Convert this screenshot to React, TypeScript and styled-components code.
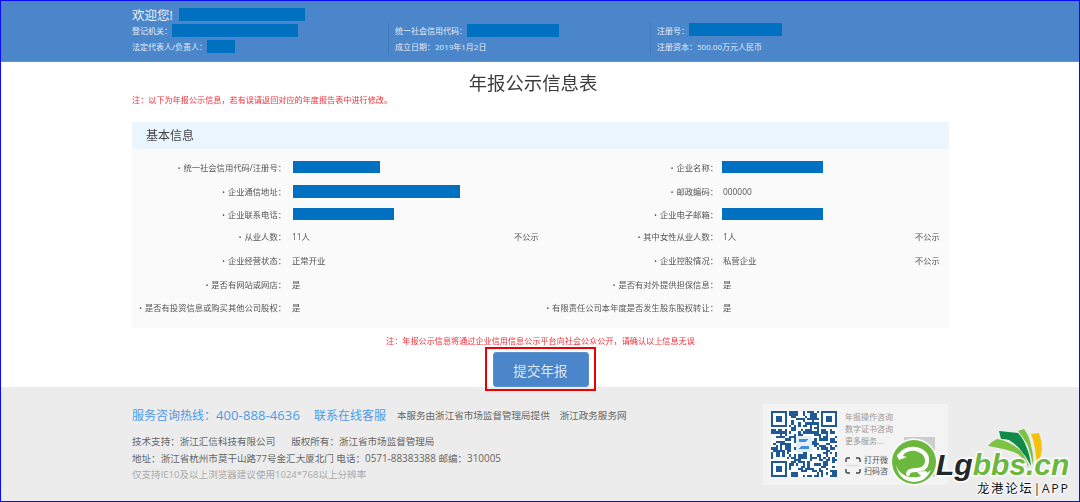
import React from "react";
import styled, { createGlobalStyle } from "styled-components";

const Global = createGlobalStyle`
  html, body { margin: 0; padding: 0; background: #fff; }
  body { font-family: "Open Sans", "Noto Sans CJK SC", sans-serif; }
  * { box-sizing: border-box; }
`;

const Page = styled.div`
  position: relative;
  width: 1080px;
  height: 502px;
  overflow: hidden;
  border: 1px solid #0a0aff;
  filter: blur(0.3px);
  display: flex;
  flex-direction: column;
`;

const Header = styled.header`
  height: 61px;
  flex: none;
  background: #4a86c9;
  border-bottom: 1px solid #5b93d0;
  padding: 5px 0 0 131px;
  color: #e4edf7;
  font-size: 8px;
`;
const Welcome = styled.div`
  height: 16px;
  display: flex;
  align-items: center;
  font-size: 12.5px;
  gap: 6px;
  color: #eef4fb;
`;
const InfoGrid = styled.div`
  display: grid;
  grid-template-columns: 256px 262px 300px;
  grid-auto-rows: 16px;
`;
const InfoCell = styled.div<{ $line?: boolean }>`
  display: flex;
  align-items: center;
  padding-left: ${(p) => (p.$line ? "6px" : "0")};
  border-left: ${(p) => (p.$line ? "1px solid #4379b8" : "none")};
`;
const Redact = styled.span<{ $w: number; $h?: number; $up?: number }>`
  display: inline-block;
  flex: none;
  width: ${(p) => p.$w}px;
  height: ${(p) => p.$h ?? 13}px;
  margin-top: ${(p) => -(p.$up ?? 0)}px;
  background: #0070c0;
`;

const Main = styled.main`
  position: relative;
  z-index: 1;
  flex: 1;
  min-height: 0;
  padding: 0 130px 0 131px;
  display: flex;
  flex-direction: column;
`;
const Title = styled.h1`
  margin: 10px 15px 0 0;
  height: 22px;
  line-height: 22px;
  font-size: 18.4px;
  font-weight: 400;
  color: #3c3c3c;
  text-align: center;
`;
const RedNote = styled.div<{ $center?: boolean }>`
  font-size: 8.15px;
  line-height: 12px;
  color: #f5303a;
  text-align: ${(p) => (p.$center ? "center" : "left")};
`;
const Panel = styled.section`
  margin-top: 16px;
  background: #fafafa;
`;
const PanelHead = styled.h2`
  margin: 0;
  height: 27px;
  line-height: 27px;
  padding-left: 14px;
  background: #eaf5fd;
  font-size: 12px;
  font-weight: 400;
  color: #444;
`;
const PanelBody = styled.div`
  padding: 6px 8px 9px 0;
`;
const InfoRow = styled.div<{ $h: number }>`
  display: grid;
  grid-template-columns: 160px 222px 25px 182px 194px 25px;
  height: ${(p) => p.$h}px;
  align-items: center;
  font-size: 8px;
  color: #555;
`;
const Label = styled.div<{ $pad: number }>`
  font-size: 8.3px;
  text-align: right;
  padding-right: ${(p) => p.$pad}px;
  white-space: nowrap;
  &::before { content: "•"; margin-right: 3px; font-size: 7px; }
`;
const Value = styled.div<{ $text: number }>`
  display: flex;
  align-items: center;
  padding-left: 1px;
  font-size: 8.4px;
  & > span:not([data-r]) { margin-left: ${(p) => p.$text}px; }
`;
const Hidden = styled.div`
  font-size: 8.2px;
  white-space: nowrap;
`;

const ConfirmBlock = styled.div`
  margin-top: 7px;
  height: 51px;
  display: flex;
  flex-direction: column;
  align-items: center;
`;
const SubmitWrap = styled.div`
  position: relative;
  margin-top: 5px;
`;
const SubmitButton = styled.button`
  display: block;
  width: 96px;
  height: 35px;
  border: 1px solid #5b90cc;
  border-radius: 3px;
  background: #4a86c9;
  color: #dfe9f5;
  font: inherit;
  font-size: 13.6px;
  padding: 0;
`;
const RedFrame = styled.div`
  position: absolute;
  inset: -5px -7px -4px -8px;
  border: 2px solid #ee0000;
  pointer-events: none;
`;

const Footer = styled.footer`
  flex: none;
  height: 114px;
  background: #ececec;
  padding: 0 131px;
  display: flex;
  justify-content: space-between;
`;
const FooterText = styled.div`
  padding-top: 19px;
`;
const HotlineRow = styled.div`
  display: flex;
  align-items: center;
  height: 17px;
  color: #4d9ae8;
  font-size: 12px;
  white-space: nowrap;
`;
const Phone = styled.span`
  font-size: 13px;
  letter-spacing: 0.1px;
`;
const OnlineLink = styled.span`
  margin-left: 14px;
`;
const Provider = styled.span`
  margin-left: 11px;
  font-size: 9.55px;
  color: #666;
`;
const GovLink = styled(Provider)`
  margin-left: 10px;
`;
const FooterLines = styled.div`
  margin-top: 11px;
  font-size: 9.55px;
  line-height: 16px;
  color: #666;
  white-space: nowrap;
`;
const Spaced = styled.span`
  margin-left: 16px;
`;
const Num = styled.span`
  font-size: 9.9px;
`;
const Muted = styled.div`
  color: #aaa;
`;
const QrCard = styled.div`
  margin-top: 17px;
  width: 185px;
  height: 81px;
  background: #f3f3f3;
  display: flex;
  padding: 7px 8px;
  gap: 8px;
`;
const QrSide = styled.div`
  position: relative;
  flex: 1;
  font-size: 8px;
  color: #999;
  line-height: 12px;
`;
const ScanRow = styled.div`
  margin-top: 7px;
  display: flex;
  align-items: center;
  gap: 3px;
  color: #555;
  line-height: 11px;
`;
const GraySquare = styled.div`
  position: absolute;
  left: 59px;
  top: 26px;
  width: 31px;
  height: 40px;
  background: #cdcdcd;
`;

const Watermark = styled.div`
  position: absolute;
  z-index: 2;
  left: 889px;
  top: 419px;
  width: 190px;
  height: 82px;
`;
const WatermarkArt = styled.svg`
  position: absolute;
  left: 0;
  top: 0;
`;
const LogoWord = styled.div`
  position: absolute;
  left: 46px;
  top: 29px;
  font-family: "Liberation Sans", sans-serif;
  font-size: 30px;
  line-height: 32px;
  font-weight: 700;
  font-style: italic;
  color: #6cb83f;
  -webkit-text-stroke: 3px #fff;
  paint-order: stroke fill;
  white-space: nowrap;
`;
const LogoDark = styled.span`
  color: #23262b;
`;
const LogoCaption = styled.div`
  position: absolute;
  left: 87px;
  top: 61px;
  font-size: 12.5px;
  line-height: 15px;
  letter-spacing: 1.6px;
  color: #111;
  white-space: nowrap;
  -webkit-text-stroke: 2px #fff;
  paint-order: stroke fill;
`;

function qrCells() {
  const n = 29;
  const cells: [number, number][] = [];
  let seed = 20190102;
  const rnd = () => {
    seed = (seed * 1664525 + 1013904223) >>> 0;
    return seed / 4294967296;
  };
  const inFinder = (x: number, y: number) =>
    (x < 8 && y < 8) || (x > n - 9 && y < 8) || (x < 8 && y > n - 9);
  const inLogo = (x: number, y: number) => x > 10 && x < 18 && y > 10 && y < 18;
  for (let y = 0; y < n; y++)
    for (let x = 0; x < n; x++)
      if (!inFinder(x, y) && !inLogo(x, y) && rnd() > 0.5) cells.push([x, y]);
  return cells;
}
const cells = qrCells();

function Finder({ x, y }: { x: number; y: number }) {
  return (
    <g>
      <rect x={x + 0.5} y={y + 0.5} width={6} height={6} fill="none" stroke="#1f5a96" />
      <rect x={x + 2} y={y + 2} width={3} height={3} fill="#1f5a96" />
    </g>
  );
}

function QrCode() {
  return (
    <svg width="66" height="66" viewBox="0 0 29 29" shapeRendering="crispEdges" style={{ flex: "none", background: "#fff" }}>
      {cells.map(([x, y]) => (
        <rect key={`${x}-${y}`} x={x} y={y} width={1} height={1} fill="#1f5a96" />
      ))}
      <Finder x={0} y={0} />
      <Finder x={22} y={0} />
      <Finder x={0} y={22} />
      <rect x={11} y={11} width={7} height={7} fill="#e3eef9" />
      <path d="M12.5 12.5h4l-3.4 3h3.4v1h-4.4l3.4-3h-3z" fill="#3d8fdc" />
    </svg>
  );
}

function ScanIcon() {
  return (
    <svg width="16" height="17" viewBox="0 0 16 17" fill="none" stroke="#444" strokeWidth="1.4">
      <path d="M1 5V2.500Q1 1 2.500 1H5M11 1h2.500Q15 1 15 2.500V5M15 12v2.500Q15 16 13.500 16H11M5 16H2.500Q1 16 1 14.500V12" />
      <path d="M1 8.500h14" stroke="#ddd" />
    </svg>
  );
}

function WatermarkDrawing() {
  return (
    <WatermarkArt width="190" height="82" viewBox="0 0 190 82">
      <path d="M98 26 Q102 21 107 19 Q120 21 131 31 Q137 39 139 48 Q134 39 128 34 Q118 29 98 26 Z" fill="#7cc243" />
      <path d="M128 11 L134 9 Q140 17 141 26 Q144 36 143 45 Q141 35 138 26 Q134 18 128 11 Z" fill="#7cc243" />
      <path d="M109 11 L128 13 Q133 18 136 26 Q140 35 141 46 Q136 36 129 28 Q124 23 119 20 Q115 19 111 19 Z" fill="#0f8a4a" />
      <path d="M141 14 L149 13 Q152 21 152 29 Q151 38 146 46 Q147 38 145 29 Q144 21 141 14 Z" fill="#f4c20d" />
      <circle cx="24" cy="42" r="23.500" fill="#fff" />
      <circle cx="24" cy="42" r="22" fill="#6cb83f" />
      <path d="M9 36 Q16 27 26 29 Q38 32 37 42 Q36 50 26 50 Q18 50 18 54" fill="none" stroke="#fff" strokeWidth="4" strokeLinecap="round" />
      <path d="M6 45 Q9 55 20 57 Q30 59 41 50 Q36 62 24 62 Q9 61 6 45 Z" fill="#fff" />
      <path d="M7 35 l8 -4 l-2 5 l4 1 l-8 3 Z" fill="#fff" />
      <path d="M27 52 l9 -1 l2 3 l-7 2 Z" fill="#fff" />
    </WatermarkArt>
  );
}

const Plain = styled.span``;

const rows = [
  { h: 24, a: "统一社会信用代码/注册号：", b: <Redact data-r $w={87} $h={12} />, c: "企业名称：", d: <Redact data-r $w={101} $h={12} /> },
  { h: 24, a: "企业通信地址：", b: <Redact data-r $w={167} />, c: "邮政编码：", d: <Plain>000000</Plain> },
  { h: 22, a: "企业联系电话：", b: <Redact data-r $w={101} $h={12} />, c: "企业电子邮箱：", d: <Redact data-r $w={101} $h={12} /> },
  { h: 22, a: "从业人数：", b: <Plain>11人</Plain>, e: "不公示", c: "其中女性从业人数：", d: <Plain>1人</Plain>, f: "不公示" },
  { h: 26, a: "企业经营状态：", b: <Plain>正常开业</Plain>, c: "企业控股情况：", d: <Plain>私营企业</Plain>, f: "不公示" },
  { h: 22, a: "是否有网站或网店：", b: <Plain>是</Plain>, c: "是否有对外提供担保信息：", d: <Plain>是</Plain> },
  { h: 24, a: "是否有投资信息或购买其他公司股权：", b: <Plain>是</Plain>, c: "有限责任公司本年度是否发生股东股权转让：", d: <Plain>是</Plain> },
];

export default function App() {
  return (
    <>
      <Global />
      <Page>
        <Header>
          <Welcome>
            <span>欢迎您!</span>
            <Redact $w={126} />
          </Welcome>
          <InfoGrid>
            <InfoCell>
              登记机关：
              <Redact $w={126} />
            </InfoCell>
            <InfoCell $line>
              统一社会信用代码：
              <Redact $w={92} />
            </InfoCell>
            <InfoCell $line>
              注册号：
              <Redact $w={93} $up={2} />
            </InfoCell>
            <InfoCell>
              法定代表人/负责人：
              <Redact $w={28} />
            </InfoCell>
            <InfoCell $line>成立日期：2019年1月2日</InfoCell>
            <InfoCell $line>注册资本：500.00万元人民币</InfoCell>
          </InfoGrid>
        </Header>
        <Main>
          <Title>年报公示信息表</Title>
          <RedNote>注：以下为年报公示信息，若有误请返回对应的年度报告表中进行修改。</RedNote>
          <Panel>
            <PanelHead>基本信息</PanelHead>
            <PanelBody>
              {rows.map((r) => (
                <InfoRow key={r.a} $h={r.h}>
                  <Label $pad={6}>{r.a}</Label>
                  <Value $text={-1}>{r.b}</Value>
                  <Hidden>{r.e}</Hidden>
                  <Label $pad={3}>{r.c}</Label>
                  <Value $text={1}>{r.d}</Value>
                  <Hidden>{r.f}</Hidden>
                </InfoRow>
              ))}
            </PanelBody>
          </Panel>
          <ConfirmBlock>
            <RedNote $center>注：年报公示信息将通过企业信用信息公示平台向社会公众公开，请确认以上信息无误</RedNote>
            <SubmitWrap>
              <SubmitButton>提交年报</SubmitButton>
              <RedFrame />
            </SubmitWrap>
          </ConfirmBlock>
        </Main>
        <Footer>
          <FooterText>
            <HotlineRow>
              服务咨询热线：<Phone>400-888-4636</Phone>
              <OnlineLink>联系在线客服</OnlineLink>
              <Provider>本服务由浙江省市场监督管理局提供</Provider>
              <GovLink>浙江政务服务网</GovLink>
            </HotlineRow>
            <FooterLines>
              <div>
                技术支持：浙江汇信科技有限公司<Spaced>版权所有：浙江省市场监督管理局</Spaced>
              </div>
              <div>
                地址：浙江省杭州市莫干山路77号金汇大厦北门 电话：<Num>0571-88383388</Num> 邮编：<Num>310005</Num>
              </div>
              <Muted>仅支持IE10及以上浏览器建议使用1024*768以上分辨率</Muted>
            </FooterLines>
          </FooterText>
          <QrCard>
            <QrCode />
            <QrSide>
              <div>年报操作咨询</div>
              <div>数字证书咨询</div>
              <div>更多服务...</div>
              <GraySquare />
              <ScanRow>
                <ScanIcon />
                <div>
                  <div>打开微</div>
                  <div>扫码咨</div>
                </div>
              </ScanRow>
            </QrSide>
          </QrCard>
        </Footer>
        <Watermark>
          <WatermarkDrawing />
          <LogoWord>
            <LogoDark>Lg</LogoDark>bbs.cn
          </LogoWord>
          <LogoCaption>龙港论坛|APP</LogoCaption>
        </Watermark>
      </Page>
    </>
  );
}
